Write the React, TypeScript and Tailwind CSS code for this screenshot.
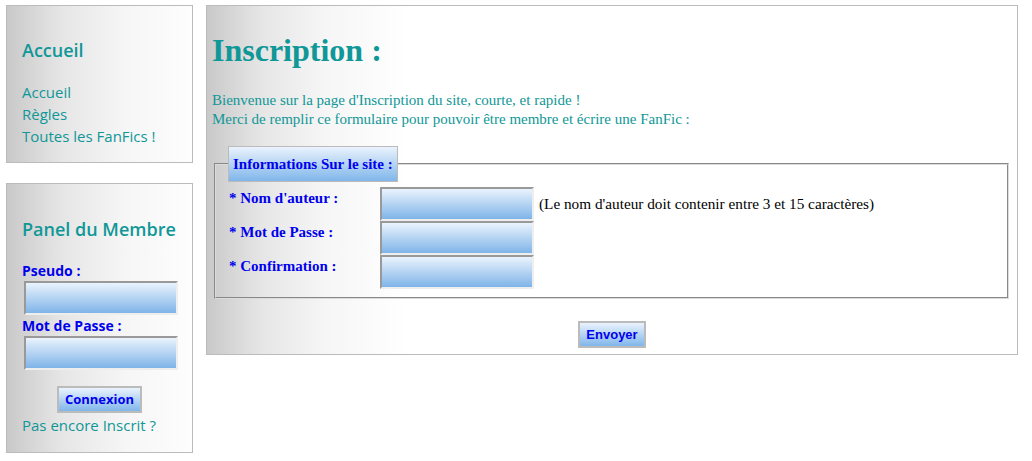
import React from 'react';

// shared looks: grey-to-white panel and the blue gradient used on inputs and buttons
const PANEL =
  'border border-[#bbbbbb] bg-[linear-gradient(to_right,#c9c9c9,#e6e6e6_55px,#f6f6f6_120px,#ffffff_200px)]';
const FIELD =
  'block h-[34px] w-[154px] border-2 border-t-[#999999] border-l-[#999999] border-b-[#eeeeee] border-r-[#eeeeee] bg-[linear-gradient(to_bottom,#eaf3fd,#7fb4e8)] outline-none';
const BLUE_BTN =
  'border-2 border-[#bbbbbb] bg-[linear-gradient(to_bottom,#eaf3fd,#80b6ea)] font-bold text-[#0000ee] text-[13px]';

function SideMenu() {
  return (
    <div className={`${PANEL} h-[158px] px-[15px] pt-[33px]`}>
      <h2 className="text-[18px] leading-[22px] font-semibold text-[#109797]">Accueil</h2>
      <ul className="mt-[20px] text-[15px] leading-[22px] text-[#109797]">
        <li>Accueil</li>
        <li>Règles</li>
        <li>Toutes les FanFics !</li>
      </ul>
    </div>
  );
}

function MemberPanel() {
  return (
    <div className={`${PANEL} h-[270px] px-[15px] pt-[34px] flex flex-col`}>
      <h2 className="text-[18px] leading-[22px] font-semibold text-[#109797]">Panel du Membre</h2>

      {/* login fields */}
      <label className="mt-[22px] text-[14px] leading-[18px] font-bold text-[#0000ee]">Pseudo :</label>
      <input type="text" className={`${FIELD} ml-[2px] mt-[1px]`} />
      <label className="mt-[2px] text-[14px] leading-[18px] font-bold text-[#0000ee]">Mot de Passe :</label>
      <input type="password" className={`${FIELD} ml-[2px] mt-[1px]`} />

      <button className={`${BLUE_BTN} self-center mt-[16px] px-[6px] py-[3px] leading-[17px]`}>
        Connexion
      </button>
      <p className="mt-[2px] text-[15px] leading-[20px] text-[#109797]">Pas encore Inscrit ?</p>
    </div>
  );
}

const ROWS = ["* Nom d'auteur :", '* Mot de Passe :', '* Confirmation :'];

function Inscription() {
  return (
    <div className={`${PANEL} w-[812px] h-[350px] pl-[5px] font-['Liberation_Serif',serif] flex flex-col`}>
      <h1 className="mt-[26px] text-[32px] leading-[37px] font-bold text-[#109797]">Inscription :</h1>
      <p className="mt-[22px] text-[15px] leading-[19px] text-[#109797]">
        Bienvenue sur la page d'Inscription du site, courte, et rapide !
        <br />
        Merci de remplir ce formulaire pour pouvoir être membre et écrire une FanFic :
      </p>

      <fieldset className="mt-[17px] ml-[2px] mr-[8px] border-2 border-[#dcdcdc] [border-style:groove] px-[12px] pt-[5px] pb-[8px]">
        <legend className="border border-[#bbbbbb] bg-[linear-gradient(to_bottom,#eaf3fd,#80b6ea)] px-[4px] py-[8px] text-[15px] leading-[18px] font-bold text-[#0000ee]">
          Informations Sur le site :
        </legend>

        <div className="grid grid-cols-[152px_154px_1fr]">
          {ROWS.map((label, i) => (
            <React.Fragment key={label}>
              <span className="pl-[1px] pt-[1px] text-[15px] leading-[20px] font-bold text-[#0000ee]">{label}</span>
              <input type={i === 0 ? 'text' : 'password'} className={FIELD} />
              <span className="ml-[5px] self-center text-[15.25px] leading-[18px] text-black">
                {i === 0 ? "(Le nom d'auteur doit contenir entre 3 et 15 caractères)" : ''}
              </span>
            </React.Fragment>
          ))}
        </div>
      </fieldset>

      <button className={`${BLUE_BTN} self-center -ml-[5px] mt-[22px] px-[6px] py-[4px] leading-[15px] font-['Liberation_Sans',sans-serif]`}>
        Envoyer
      </button>
    </div>
  );
}

export default function App() {
  return (
    <div className="min-h-[461px] bg-white flex items-start gap-[13px] pl-[6px] pt-[5px] font-['Open_Sans',sans-serif]">
      <aside className="w-[187px] flex flex-col gap-[20px]">
        <SideMenu />
        <MemberPanel />
      </aside>
      <Inscription />
    </div>
  );
}
